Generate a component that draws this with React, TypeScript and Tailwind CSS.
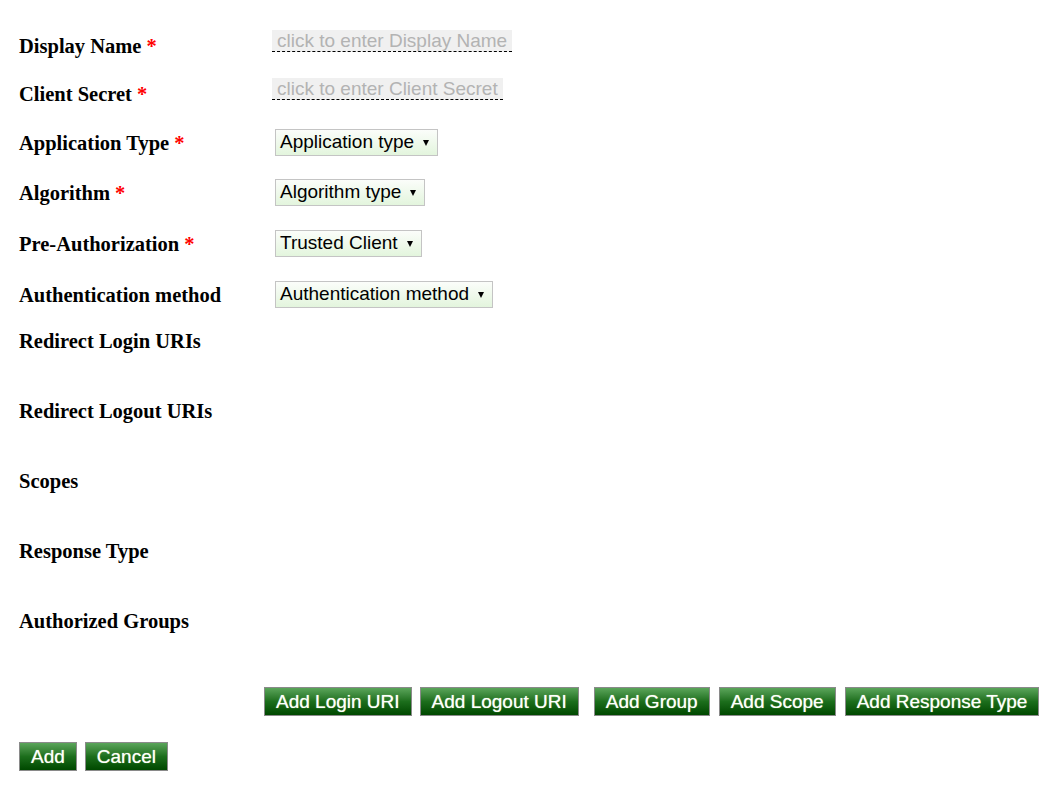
import React from "react";

const serif = { fontFamily: '"Liberation Serif", "Times New Roman", serif' };

function Label({ text, required }: { text: string; required?: boolean }) {
  return (
    <div className="w-[253px] shrink-0 text-[20.5px] leading-[24px] font-bold text-black" style={serif}>
      {text}
      {required && <span className="ml-[5px] text-[#ff0000]">*</span>}
    </div>
  );
}

function Editable({ placeholder }: { placeholder: string }) {
  return (
    <span className="inline-block whitespace-nowrap bg-[#f0f0f0] px-[5px] text-[19px] leading-[21px] text-[#b3b3b3] border-b border-dashed border-black">
      {placeholder}
    </span>
  );
}

function Select({ value }: { value: string }) {
  return (
    <div className="ml-[3px] flex h-[27px] items-center gap-[9px] whitespace-nowrap border border-[#c4c4c4] bg-gradient-to-b from-[#fbfdfa] to-[#e3f5dd] pl-[4px] pr-[8px] text-[19px] text-black">
      <span>{value}</span>
      <svg width="6" height="6" viewBox="0 0 6 6" className="mt-[1px]">
        <path d="M0 0 H6 L3 6 Z" fill="#000" />
      </svg>
    </div>
  );
}

function GreenButton({ children }: { children: React.ReactNode }) {
  return (
    <button className="h-[29px] shrink-0 whitespace-nowrap border border-[#8a8a8a] bg-gradient-to-b from-[#5aa55a] via-[#1c6e1c] to-[#004800] px-[11px] text-[19px] leading-[27px] text-white [text-shadow:0_0_1px_#c8e6a0]">
      {children}
    </button>
  );
}

export default function App() {
  const lists = ["Redirect Login URIs", "Redirect Logout URIs", "Scopes", "Response Type", "Authorized Groups"];

  return (
    <div className="min-h-[793px] w-[1058px] bg-white pt-[22px]" style={{ fontFamily: '"Liberation Sans", Arial, sans-serif' }}>
      <div className="flex h-[48px] items-center pl-[19px]">
        <Label text="Display Name" required />
        <div className="-mt-[8px]">
          <Editable placeholder="click to enter Display Name" />
        </div>
      </div>
      <div className="flex h-[48px] items-center pl-[19px]">
        <Label text="Client Secret" required />
        <div className="-mt-[8px]">
          <Editable placeholder="click to enter Client Secret" />
        </div>
      </div>
      <div className="flex h-[49px] items-center pl-[19px]">
        <Label text="Application Type" required />
        <Select value="Application type" />
      </div>
      <div className="flex h-[51px] items-center pl-[19px]">
        <Label text="Algorithm" required />
        <Select value="Algorithm type" />
      </div>
      <div className="flex h-[51px] items-center pl-[19px]">
        <Label text="Pre-Authorization" required />
        <Select value="Trusted Client" />
      </div>
      <div className="flex h-[51px] items-center pl-[19px]">
        <Label text="Authentication method" />
        <Select value="Authentication method" />
      </div>

      {lists.map((l) => (
        <div key={l} className="h-[70px] pl-[19px] pt-[9px]">
          <Label text={l} />
        </div>
      ))}

      <div className="mt-[17px] flex gap-[8px] pl-[264px]">
        <GreenButton>Add Login URI</GreenButton>
        <GreenButton>Add Logout URI</GreenButton>
        <div className="ml-[7px] flex gap-[9px]">
          <GreenButton>Add Group</GreenButton>
          <GreenButton>Add Scope</GreenButton>
          <GreenButton>Add Response Type</GreenButton>
        </div>
      </div>

      <div className="mt-[26px] flex gap-[8px] pl-[19px]">
        <GreenButton>Add</GreenButton>
        <GreenButton>Cancel</GreenButton>
      </div>
    </div>
  );
}
